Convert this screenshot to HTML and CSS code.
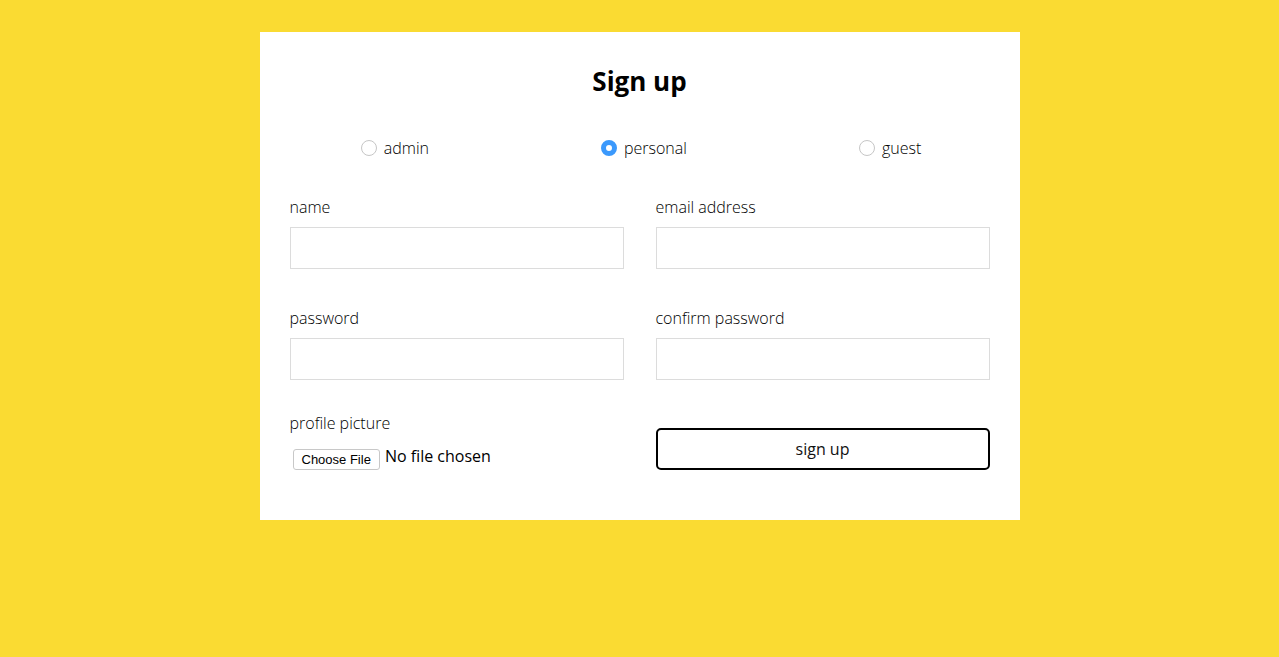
FILE: index.html
```html
<!DOCTYPE html>
<html>
<head>
<meta charset="utf-8">
<link rel="stylesheet" href="styles.css">
</head>
<body>
<form class="card">
  <h1 class="title">Sign up</h1>
  <div class="roles">
    <label class="role"><input type="radio" name="role" class="radio"> admin</label>
    <label class="role"><input type="radio" name="role" class="radio" checked> personal</label>
    <label class="role"><input type="radio" name="role" class="radio"> guest</label>
  </div>
  <div class="fields">
    <div class="field">
      <label class="label">name</label>
      <input class="text" type="text">
    </div>
    <div class="field">
      <label class="label">email address</label>
      <input class="text" type="email">
    </div>
    <div class="field">
      <label class="label">password</label>
      <input class="text" type="password">
    </div>
    <div class="field">
      <label class="label">confirm password</label>
      <input class="text" type="password">
    </div>
    <div class="field field-last">
      <label class="label">profile picture</label>
      <input class="file" type="file">
    </div>
    <div class="field field-last">
      <button class="submit" type="button">sign up</button>
    </div>
  </div>
</form>
</body>
</html>
```
FILE: styles.css
```css
html, body {
  margin: 0;
  padding: 0;
}
body {
  background: #fadb32;
  font-family: "Open Sans", "Liberation Sans", sans-serif;
  color: #1a1a1a;
  min-height: 657px;
}
.card {
  box-sizing: border-box;
  width: 760px;
  margin: 32px auto 0;
  background: #fff;
  padding: 30px 30px 50px;
}
.title {
  margin: 0;
  text-align: center;
  font-size: 26px;
  line-height: 38px;
  font-weight: 700;
  color: #000;
}
.roles {
  margin-top: 38px;
  display: flex;
  justify-content: center;
  gap: 172px;
  height: 20px;
  align-items: center;
  padding-left: 3px;
}
.role {
  display: flex;
  align-items: center;
  gap: 7px;
  font-size: 16px;
  line-height: 20px;
  color: #000;
  font-weight: 300;
}
.radio {
  appearance: none;
  -webkit-appearance: none;
  margin: 0;
  width: 16px;
  height: 16px;
  border-radius: 50%;
  border: 1px solid #c6c6c6;
  background: #fff;
  box-sizing: border-box;
}
.radio:checked {
  border: 5px solid #3b99fc;
  background: #fff;
}
.fields {
  margin-top: 38px;
  display: grid;
  grid-template-columns: 334px 334px;
  column-gap: 32px;
  row-gap: 38px;
}
.field {
  display: flex;
  flex-direction: column;
}
.field-last {
  justify-content: flex-end;
  margin-top: -6px;
}
.label {
  font-size: 16px;
  line-height: 22px;
  margin-bottom: 9px;
  color: #000;
  font-weight: 300;
}
.field-last .label {
  margin-bottom: 14px;
}
.text {
  box-sizing: border-box;
  width: 334px;
  height: 42px;
  border: 1px solid #dcdcdc;
  border-radius: 0;
  margin: 0;
  padding: 0 10px;
  outline: none;
  background: #fff;
}
.file {
  margin: 0 0 0 3px;
  font-family: "Open Sans", "Liberation Sans", sans-serif;
  font-size: 16px;
  color: #000;
  height: 22px;
  line-height: 16px;
  overflow: visible;
}
.file::file-selector-button {
  font-family: "Liberation Sans", Arial, sans-serif;
  font-size: 13px;
  height: 21px;
  padding: 0 8px;
  margin: 1px 5px 0 0;
  background: #fff;
  border: 1px solid #c8c8c8;
  border-radius: 3px;
  color: #000;
  vertical-align: top;
}
.submit {
  box-sizing: border-box;
  width: 334px;
  height: 42px;
  border: 2px solid #000;
  border-radius: 5px;
  background: #fff;
  font-family: "Open Sans", "Liberation Sans", sans-serif;
  font-size: 16px;
  font-weight: 400;
  color: #111;
  padding: 0;
}
```
